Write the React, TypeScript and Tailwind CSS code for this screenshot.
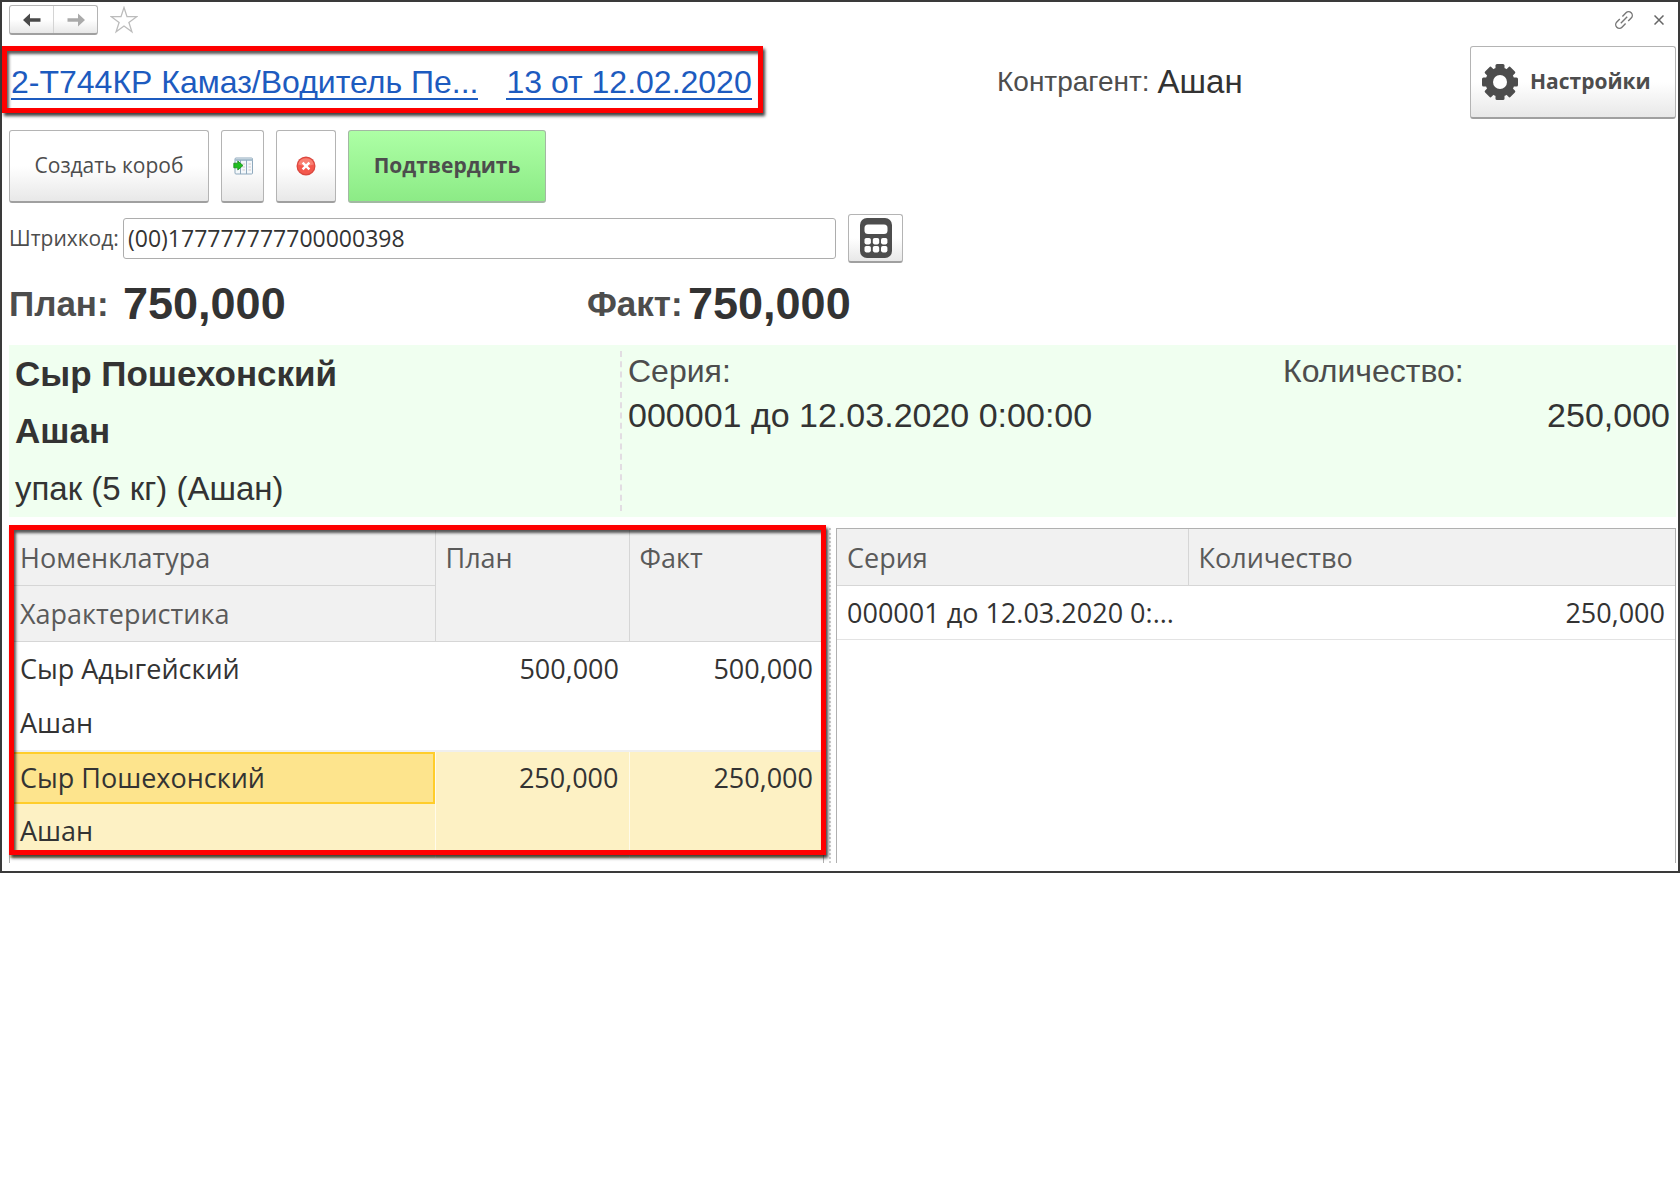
import { useState } from "react";

const raised =
  "border border-[#b4b4b4] border-b-2 border-b-[#a0a0a0] rounded-[3px] bg-linear-to-b from-white from-50% to-[#e8e8e8]";

const items = [
  { name: "Сыр Адыгейский", kind: "Ашан", plan: "500,000", fact: "500,000" },
  { name: "Сыр Пошехонский", kind: "Ашан", plan: "250,000", fact: "250,000" },
];

const ArrowIcon = ({ className }: { className: string }) => (
  <svg viewBox="0 0 18 14" className={className} fill="currentColor">
    <path d="M0 7 7 0.5V5.2H17.5V8.8H7V13.5Z" />
  </svg>
);

const StarIcon = () => (
  <svg viewBox="0 0 28 28" className="size-7" fill="none" stroke="#bcbcbc" strokeWidth="1.3">
    <path d="M14 1.5 17 10.7H26.7L18.9 16.4 21.9 25.8 14 20 6.1 25.8 9.1 16.4 1.3 10.7H11Z" />
  </svg>
);

const LinkIcon = () => (
  <svg viewBox="0 0 20 20" className="size-5" fill="none" stroke="#777" strokeWidth="1.4">
    <path d="M6.8 13.2 13.2 6.8" />
    <path d="M8.4 6.4 12 2.8A3.6 3.6 0 0 1 17.2 8L14.2 11" />
    <path d="M5.8 9 2.8 12A3.6 3.6 0 0 0 8 17.2L11.6 13.6" />
  </svg>
);

const GearIcon = () => (
  <svg viewBox="0 0 36 36" className="size-9" fill="#4d4d4d">
    <g>
      {[0, 45, 90, 135].map((angle) => (
        <rect key={angle} x="13.5" y="0" width="9" height="36" rx="1.5" transform={`rotate(${angle} 18 18)`} />
      ))}
      <circle cx="18" cy="18" r="14.5" />
    </g>
    <circle cx="18" cy="18" r="7" fill="#fff" />
  </svg>
);

const MoveToTableIcon = () => (
  <svg viewBox="0 0 20 18" className="h-[18px] w-5">
    <rect x="2" y="1" width="17.5" height="16" rx="1" fill="#f4f8fb" stroke="#8fa9bd" />
    <path d="M2 3H19.5" stroke="#a9bfce" strokeWidth="2" />
    <path d="M7.5 3V17M13.5 3V17" stroke="#8fa9bd" />
    <path d="M9.5 7H12M9.5 10H12M9.5 13H12M15.5 7H18M15.5 10H18M15.5 13H18" stroke="#d3c9c9" />
    <path d="M0.8 6.2H4.8V4L10 8.5 4.8 13V10.8H0.8Z" fill="#1fbf1f" stroke="#168a16" strokeWidth="0.8" />
  </svg>
);

const CancelIcon = () => (
  <svg viewBox="0 0 20 20" className="size-5">
    <circle cx="10" cy="10" r="9.5" fill="#d9483f" />
    <circle cx="10" cy="10" r="8.3" fill="#f4584d" />
    <path d="M2.2 8.5A8 8 0 0 1 17.8 8.5Q10 11 2.2 8.5Z" fill="#f98174" />
    <path d="M6.6 6.6 13.4 13.4M13.4 6.6 6.6 13.4" stroke="#fff" strokeWidth="2.4" />
  </svg>
);

const CalculatorIcon = () => (
  <svg viewBox="0 0 32 40" className="h-10 w-8">
    <rect width="32" height="40" rx="7" fill="#4d4d4d" />
    <rect x="4.5" y="6.5" width="23" height="9.5" rx="3.5" fill="#fff" />
    {[20, 28].map((y) =>
      [4.5, 12.8, 21].map((x) => (
        <rect key={`${x}-${y}`} x={x} y={y} width="6.4" height="6.4" rx="1.8" fill="#fff" />
      ))
    )}
  </svg>
);

// Red marker drawn over the area it surrounds
const Highlight = ({ className }: { className: string }) => (
  <div
    className={`pointer-events-none absolute border-[5px] border-[#fe0000] shadow-[2px_3px_3px_rgba(0,0,0,0.75),inset_2px_3px_3px_rgba(0,0,0,0.65)] ${className}`}
  />
);

export default function App() {
  const [barcode, setBarcode] = useState("(00)177777777700000398");

  return (
    <div className="min-h-screen bg-white font-['Liberation_Sans',Arial,sans-serif] text-[#333]">
      <div className="border-2 border-[#3a3a3a] pt-[3px] pr-0.5 pb-2 pl-[7px]">
        {/* Window bar */}
        <div className="flex h-[30px] items-center">
          <div className={`flex h-[30px] w-[89px] ${raised}`}>
            <button aria-label="Назад" className="flex flex-1 items-center justify-center border-r border-[#d4d4d4] text-[#4a4a4a]">
              <ArrowIcon className="h-3.5 w-[18px]" />
            </button>
            <button aria-label="Вперед" className="flex flex-1 items-center justify-center text-[#aaa]">
              <ArrowIcon className="h-3.5 w-[18px] rotate-180" />
            </button>
          </div>
          <button aria-label="Избранное" className="ml-3">
            <StarIcon />
          </button>
          <div className="mr-3 ml-auto flex items-center gap-5">
            <button aria-label="Ссылка">
              <LinkIcon />
            </button>
            <button aria-label="Закрыть">
              <svg viewBox="0 0 10 10" className="size-2.5" stroke="#666" strokeWidth="1.5">
                <path d="M0.5 0.5 9.5 9.5M9.5 0.5 0.5 9.5" />
              </svg>
            </button>
          </div>
        </div>

        {/* Document header */}
        <div className="mt-[11px] flex h-[73px] items-center">
          <div className="relative flex h-full w-[988px] items-center gap-7 text-[32px] whitespace-nowrap text-[#1d5bbf]">
            <a href="#route" className="ml-0.5 border-b-2 leading-8">
              2-Т744КР Камаз/Водитель Пе...
            </a>
            <a href="#order" className="border-b-2 leading-8">
              13 от 12.02.2020
            </a>
            <Highlight className="top-0 -left-[7px] h-[67px] w-[761px]" />
          </div>
          <div className="flex items-center gap-2 pb-0.5 leading-9">
            <span className="text-[28px] text-[#4d4d4d]">Контрагент:</span>
            <span className="text-[33px]">Ашан</span>
          </div>
          <button
            className={`ml-auto flex h-full w-[206px] items-center gap-3 pl-[11px] font-['Open_Sans',sans-serif] text-[21px] font-bold text-[#4d4d4d] ${raised}`}
          >
            <GearIcon />
            Настройки
          </button>
        </div>

        {/* Commands */}
        <div className="mt-[11px] flex h-[73px] gap-3 font-['Open_Sans',sans-serif] text-[21px] text-[#4d4d4d]">
          <button className={`w-[200px] ${raised}`}>Создать короб</button>
          <button aria-label="Перенести в таблицу" className={`flex w-[43px] items-center justify-center ${raised}`}>
            <MoveToTableIcon />
          </button>
          <button aria-label="Отменить" className={`flex w-[60px] items-center justify-center ${raised}`}>
            <CancelIcon />
          </button>
          <button className="w-[198px] rounded-[3px] border border-b-2 border-[#a3b8a3] bg-linear-to-b from-[#adffa5] to-[#8ceb86] font-bold">
            Подтвердить
          </button>
        </div>

        {/* Barcode */}
        <div className="mt-[11px] flex items-center font-['Open_Sans',sans-serif] text-[23px]">
          <label htmlFor="barcode" className="w-[114px] text-[21px] text-[#4d4d4d]">
            Штрихкод:
          </label>
          <input
            id="barcode"
            value={barcode}
            onChange={(e) => setBarcode(e.target.value)}
            className="h-[41px] w-[713px] rounded-[3px] border border-[#adadad] pb-0.5 pl-1 outline-none"
          />
          <button aria-label="Калькулятор" className={`ml-3 flex h-[49px] w-[55px] items-center justify-center ${raised}`}>
            <CalculatorIcon />
          </button>
        </div>

        {/* Totals */}
        <div className="flex h-[82px] items-center font-bold">
          <div className="flex w-[578px] items-center">
            <span className="w-[114px] text-[35px] text-[#4d4d4d]">План:</span>
            <span className="text-[45px]">750,000</span>
          </div>
          <span className="w-[101px] text-[35px] text-[#4d4d4d]">Факт:</span>
          <span className="text-[45px]">750,000</span>
        </div>

        {/* Current item */}
        <div className="flex bg-[#f0fff0] py-1.5">
          <div className="-my-1.5 w-[611px] pl-1.5 text-[35px] leading-[57px] font-bold">
            <p>{items[1].name}</p>
            <p>{items[1].kind}</p>
            <p className="pt-px text-[33px] font-normal">упак (5 кг) (Ашан)</p>
          </div>
          <div className="w-[656px] border-l-2 border-dashed border-[#e2dde2] pl-1.5 text-[34px] leading-[48px]">
            <p className="text-[32px] leading-10 text-[#4d4d4d]">Серия:</p>
            <p>000001 до 12.03.2020 0:00:00</p>
          </div>
          <div className="flex-1 pr-1.5 pl-[7px] text-[34px] leading-[48px]">
            <p className="text-[32px] leading-10 text-[#4d4d4d]">Количество:</p>
            <p className="text-right">250,000</p>
          </div>
        </div>

        {/* Tables */}
        <div className="relative mt-[11px] flex h-[335px] font-['Open_Sans',sans-serif] text-[27px] leading-9">
          <div className="w-[815px] border border-[#b0b0b0] border-b-0">
            <table className="w-full table-fixed border-collapse">
              <colgroup>
                <col className="w-[425px]" />
                <col className="w-[194px]" />
                <col />
              </colgroup>
              <thead className="bg-[#f1f1f1] text-left text-[#5a5a5a]">
                <tr className="h-14 border-b border-[#d6d6d6]">
                  <th className="border-r border-b border-[#d6d6d6] pt-0.5 pl-2.5 font-normal">Номенклатура</th>
                  <th rowSpan={2} className="border-r border-[#d6d6d6] pt-[11px] pl-2.5 align-top font-normal">План</th>
                  <th rowSpan={2} className="pt-[11px] pl-2.5 align-top font-normal">Факт</th>
                </tr>
                <tr className="h-14 border-b border-[#d6d6d6]">
                  <th className="border-r border-[#d6d6d6] pt-0.5 pl-2.5 font-normal">Характеристика</th>
                </tr>
              </thead>
              <tbody>
                <tr className="border-b-2 border-[#efefef]">
                  <td>
                    <p className="pl-2.5 leading-[54px]">{items[0].name}</p>
                    <p className="pl-2.5 leading-[54px]">{items[0].kind}</p>
                  </td>
                  <td className="pr-2.5 text-right align-top leading-[54px]">{items[0].plan}</td>
                  <td className="pr-2.5 text-right align-top leading-[54px]">{items[0].fact}</td>
                </tr>
                <tr className="bg-[#fdf1c4]">
                  <td className="border-r border-[#fffbea]">
                    <p className="border-2 border-[#ffcd2b] bg-[#fde48d] pl-2 leading-[48px]">{items[1].name}</p>
                    <p className="pl-2.5 leading-[54px]">{items[1].kind}</p>
                  </td>
                  <td className="border-r border-[#fffbea] pr-2.5 text-right align-top leading-[52px]">{items[1].plan}</td>
                  <td className="pr-2.5 text-right align-top leading-[52px]">{items[1].fact}</td>
                </tr>
              </tbody>
            </table>
          </div>
          <div className="mr-[5px] ml-[5px] border-l-2 border-dotted border-[#cfcfcf]" />
          <div className="flex-1 border border-[#b0b0b0] border-b-0">
            <table className="w-full table-fixed border-collapse">
              <colgroup>
                <col className="w-[351px]" />
                <col />
              </colgroup>
              <thead className="bg-[#f1f1f1] text-left text-[#5a5a5a]">
                <tr className="h-14 border-b border-[#d6d6d6]">
                  <th className="border-r border-[#d6d6d6] pt-0.5 pl-2.5 font-normal">Серия</th>
                  <th className="pt-0.5 pl-2.5 font-normal">Количество</th>
                </tr>
              </thead>
              <tbody>
                <tr className="h-[54px] border-b border-[#e3e3e3]">
                  <td className="pt-0.5 pl-2.5 whitespace-nowrap">000001 до 12.03.2020 0:...</td>
                  <td className="pt-0.5 pr-2.5 text-right">250,000</td>
                </tr>
              </tbody>
            </table>
          </div>
          <Highlight className="-top-[3px] left-0 h-[330px] w-[817px]" />
        </div>
      </div>
    </div>
  );
}
